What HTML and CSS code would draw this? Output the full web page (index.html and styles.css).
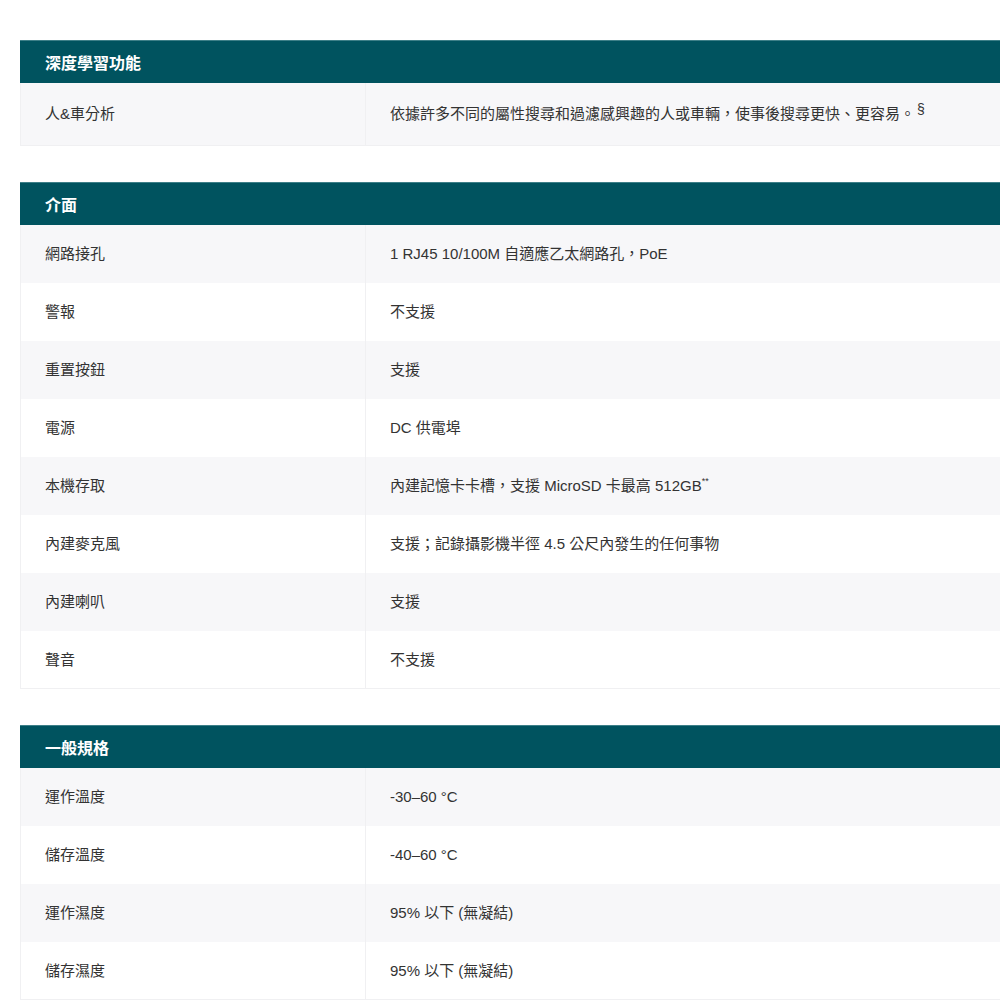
FILE: index.html
```html
<!DOCTYPE html>
<html lang="zh-Hant">
<head>
<meta charset="utf-8">
<title>規格</title>
<link rel="stylesheet" href="styles.css">
</head>
<body>
<div class="specs">
  <section class="spec-section">
    <div class="spec-head">深度學習功能</div>
    <div class="spec-row tall"><div class="spec-key">人&amp;車分析</div><div class="spec-val"><span>依據許多不同的屬性搜尋和過濾感興趣的人或車輛，使事後搜尋更快、更容易。<sup class="sect">§</sup></span></div></div>
  </section>
  <section class="spec-section">
    <div class="spec-head">介面</div>
    <div class="spec-row"><div class="spec-key">網路接孔</div><div class="spec-val"><span>1 RJ45 10/100M 自適應乙太網路孔，PoE</span></div></div>
    <div class="spec-row"><div class="spec-key">警報</div><div class="spec-val"><span>不支援</span></div></div>
    <div class="spec-row"><div class="spec-key">重置按鈕</div><div class="spec-val"><span>支援</span></div></div>
    <div class="spec-row"><div class="spec-key">電源</div><div class="spec-val"><span>DC 供電埠</span></div></div>
    <div class="spec-row"><div class="spec-key">本機存取</div><div class="spec-val"><span>內建記憶卡卡槽，支援 MicroSD 卡最高 512GB<sup class="star">**</sup></span></div></div>
    <div class="spec-row"><div class="spec-key">內建麥克風</div><div class="spec-val"><span>支援；記錄攝影機半徑 4.5 公尺內發生的任何事物</span></div></div>
    <div class="spec-row"><div class="spec-key">內建喇叭</div><div class="spec-val"><span>支援</span></div></div>
    <div class="spec-row"><div class="spec-key">聲音</div><div class="spec-val"><span>不支援</span></div></div>
  </section>
  <section class="spec-section">
    <div class="spec-head">一般規格</div>
    <div class="spec-row"><div class="spec-key">運作溫度</div><div class="spec-val"><span>-30–60 °C</span></div></div>
    <div class="spec-row"><div class="spec-key">儲存溫度</div><div class="spec-val"><span>-40–60 °C</span></div></div>
    <div class="spec-row"><div class="spec-key">運作濕度</div><div class="spec-val"><span>95% 以下 (無凝結)</span></div></div>
    <div class="spec-row"><div class="spec-key">儲存濕度</div><div class="spec-val"><span>95% 以下 (無凝結)</span></div></div>
  </section>
</div>
</body>
</html>
```
FILE: styles.css
```css
html, body {
  margin: 0;
  padding: 0;
  overflow: hidden;
  background: #fff;
}
body {
  font-family: "Liberation Sans", "Noto Sans CJK TC", sans-serif;
  font-size: 15px;
  color: #333;
}
.specs {
  padding: 40px 0 0 20px;
  display: flex;
  flex-direction: column;
  gap: 36px;
}
.spec-head {
  background: #00535f;
  border-top: 1px solid #3d7f88;
  height: 43px;
  box-sizing: border-box;
  display: flex;
  align-items: center;
  padding: 0 25px;
  color: #fff;
  font-weight: bold;
  font-size: 16px;
}
.spec-row {
  display: grid;
  grid-template-columns: 345px 1fr;
  min-height: 58px;
  border-left: 1px solid #f0f0f2;
  box-sizing: border-box;
}
.spec-row.tall {
  min-height: 63px;
}
.spec-section .spec-row:nth-child(even) {
  background: #f7f7f9;
}
.spec-section .spec-row:last-child {
  border-bottom: 1px solid #f0f0f2;
}
.spec-key, .spec-val {
  display: flex;
  align-items: center;
  padding: 0 24px;
  line-height: 20px;
}
.spec-key {
  border-right: 1px solid #f0f0f2;
}
.sect {
  font-size: 14px;
  line-height: 0;
  vertical-align: 5px;
  margin-left: 2px;
}
.star {
  font-size: 9px;
  line-height: 0;
  vertical-align: 7px;
}
```
